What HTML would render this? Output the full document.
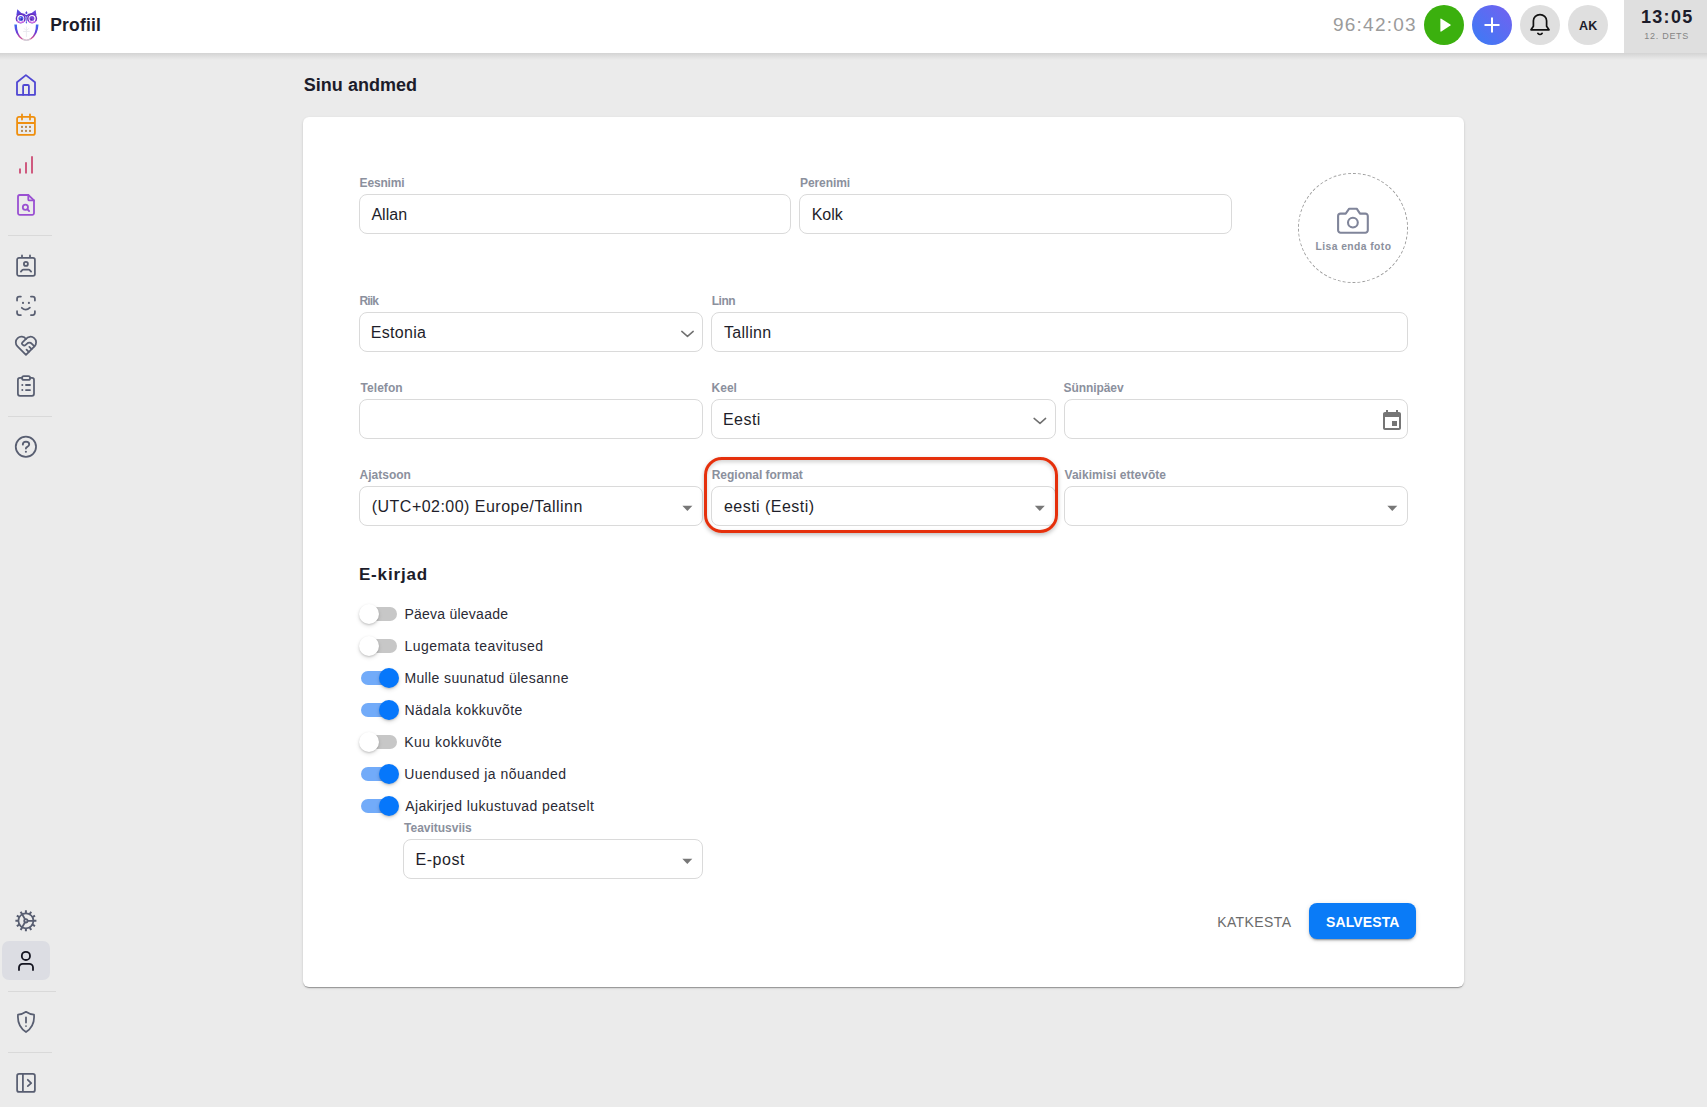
<!DOCTYPE html>
<html><head><meta charset="utf-8"><title>Profiil</title><style>
*{box-sizing:border-box;margin:0;padding:0}
html,body{width:1707px;height:1107px;overflow:hidden;background:#ebebeb;font-family:"Liberation Sans",sans-serif}
.a,.t{position:absolute}
.t{white-space:nowrap}
svg{position:absolute;left:0;top:0;overflow:visible}
</style></head>
<body>
<div class="a" style="left:0px;top:53px;width:1707px;height:7px;background:linear-gradient(rgba(0,0,0,.10),rgba(0,0,0,.055) 45%,rgba(0,0,0,0))"></div>
<div class="a" style="left:0px;top:0px;width:1707px;height:53px;background:#fff"></div>
<div class="a" style="left:1624px;top:0px;width:83px;height:53px;background:#dfdfdf"></div>
<div class="t" style="left:50.25px;top:13.83px;font-size:17.5px;line-height:22px;font-weight:700;color:#1c1c2a;letter-spacing:0.167px;">Profiil</div>
<div class="t" style="left:1333.00px;top:13.41px;font-size:19px;line-height:24px;font-weight:400;color:#9b9b9b;letter-spacing:1.229px;">96:42:03</div>
<div class="a" style="left:1424px;top:5px;width:40px;height:40px;background:#3bb00e;border-radius:50%"></div>
<div class="a" style="left:1472px;top:5px;width:40px;height:40px;background:linear-gradient(225deg,#7460f0,#3a7cf5);border-radius:50%"></div>
<div class="a" style="left:1520px;top:5px;width:40px;height:40px;background:#dfdfdf;border-radius:50%"></div>
<div class="a" style="left:1568px;top:5px;width:40px;height:40px;background:#dfdfdf;border-radius:50%"></div>
<div class="t" style="left:1578.90px;top:18.37px;font-size:12.5px;line-height:16px;font-weight:700;color:#1c1c2a;letter-spacing:0.4px;">AK</div>
<div class="t" style="left:1640.90px;top:5.86px;font-size:18px;line-height:22px;font-weight:700;color:#1c1c2a;letter-spacing:1.35px;">13:05</div>
<div class="t" style="left:1644.30px;top:31.08px;font-size:9px;line-height:11px;font-weight:400;color:#858585;letter-spacing:0.714px;">12. DETS</div>
<div class="t" style="left:303.70px;top:73.76px;font-size:18px;line-height:22px;font-weight:700;color:#1c1c2a;letter-spacing:0.04px;">Sinu andmed</div>
<div class="a" style="left:303px;top:117px;width:1161px;height:870px;background:#fff;border-radius:6px;box-shadow:0px 2px 1px -1px rgba(0,0,0,0.2),0px 1px 1px 0px rgba(0,0,0,0.14),0px 1px 3px 0px rgba(0,0,0,0.12)"></div>
<div class="t" style="left:359.60px;top:176.14px;font-size:12px;line-height:15px;font-weight:700;color:#8b909d;letter-spacing:-0.167px;">Eesnimi</div>
<div class="t" style="left:800.00px;top:176.14px;font-size:12px;line-height:15px;font-weight:700;color:#8b909d;letter-spacing:-0.086px;">Perenimi</div>
<div class="a" style="left:359px;top:194px;width:432px;height:40px;border:1px solid #dadada;border-radius:8px;background:#fff"></div>
<div class="a" style="left:799px;top:194px;width:433px;height:40px;border:1px solid #dadada;border-radius:8px;background:#fff"></div>
<div class="t" style="left:371.40px;top:204.55px;font-size:16px;line-height:20px;font-weight:400;color:#1e1e2a;letter-spacing:0.05px;">Allan</div>
<div class="t" style="left:811.70px;top:204.55px;font-size:16px;line-height:20px;font-weight:400;color:#1e1e2a;letter-spacing:0.0px;">Kolk</div>
<div class="a" style="left:1298px;top:173px;width:110px;height:110px;border:1px dashed #9e9e9e;border-radius:50%"></div>
<div class="t" style="left:1315.60px;top:239.53px;font-size:10.3px;line-height:13px;font-weight:700;color:#8b909d;letter-spacing:0.431px;">Lisa enda foto</div>
<div class="t" style="left:359.50px;top:294.24px;font-size:12px;line-height:15px;font-weight:700;color:#8b909d;letter-spacing:-0.867px;">Riik</div>
<div class="t" style="left:711.70px;top:294.24px;font-size:12px;line-height:15px;font-weight:700;color:#8b909d;letter-spacing:-0.467px;">Linn</div>
<div class="a" style="left:359px;top:312px;width:344.33000000000004px;height:40px;border:1px solid #dadada;border-radius:8px;background:#fff"></div>
<div class="a" style="left:711.33px;top:312px;width:696.67px;height:40px;border:1px solid #dadada;border-radius:8px;background:#fff"></div>
<div class="t" style="left:370.80px;top:322.95px;font-size:16px;line-height:20px;font-weight:400;color:#1e1e2a;letter-spacing:0.3px;">Estonia</div>
<div class="t" style="left:724.00px;top:322.75px;font-size:16px;line-height:20px;font-weight:400;color:#1e1e2a;letter-spacing:0.3px;">Tallinn</div>
<div class="t" style="left:360.60px;top:380.64px;font-size:12px;line-height:15px;font-weight:700;color:#8b909d;letter-spacing:0.033px;">Telefon</div>
<div class="t" style="left:711.60px;top:380.64px;font-size:12px;line-height:15px;font-weight:700;color:#8b909d;letter-spacing:0.0px;">Keel</div>
<div class="t" style="left:1063.50px;top:380.64px;font-size:12px;line-height:15px;font-weight:700;color:#8b909d;letter-spacing:-0.075px;">Sünnipäev</div>
<div class="a" style="left:359px;top:399px;width:344.33000000000004px;height:40px;border:1px solid #dadada;border-radius:8px;background:#fff"></div>
<div class="a" style="left:711.33px;top:399px;width:344.34000000000003px;height:40px;border:1px solid #dadada;border-radius:8px;background:#fff"></div>
<div class="a" style="left:1063.67px;top:399px;width:344.3299999999999px;height:40px;border:1px solid #dadada;border-radius:8px;background:#fff"></div>
<div class="t" style="left:723.00px;top:409.65px;font-size:16px;line-height:20px;font-weight:400;color:#1e1e2a;letter-spacing:0.45px;">Eesti</div>
<div class="t" style="left:359.60px;top:468.34px;font-size:12px;line-height:15px;font-weight:700;color:#8b909d;letter-spacing:0.0px;">Ajatsoon</div>
<div class="t" style="left:711.70px;top:468.34px;font-size:12px;line-height:15px;font-weight:700;color:#8b909d;letter-spacing:-0.014px;">Regional format</div>
<div class="t" style="left:1064.50px;top:468.34px;font-size:12px;line-height:15px;font-weight:700;color:#8b909d;letter-spacing:0.047px;">Vaikimisi ettevõte</div>
<div class="a" style="left:359px;top:486px;width:344.33000000000004px;height:40px;border:1px solid #dadada;border-radius:8px;background:#fff"></div>
<div class="a" style="left:711.33px;top:486px;width:344.34000000000003px;height:40px;border:1px solid #dadada;border-radius:8px;background:#fff"></div>
<div class="a" style="left:1063.67px;top:486px;width:344.3299999999999px;height:40px;border:1px solid #dadada;border-radius:8px;background:#fff"></div>
<div class="t" style="left:371.80px;top:496.65px;font-size:16px;line-height:20px;font-weight:400;color:#1e1e2a;letter-spacing:0.472px;">(UTC+02:00) Europe/Tallinn</div>
<div class="t" style="left:724.00px;top:497.25px;font-size:16px;line-height:20px;font-weight:400;color:#1e1e2a;letter-spacing:0.467px;">eesti (Eesti)</div>
<div class="a" style="left:704px;top:457px;width:354px;height:76px;border:3px solid #e5300c;border-radius:18px;box-shadow:0 2px 4px rgba(0,0,0,.25), inset 0 2px 4px rgba(0,0,0,.18)"></div>
<div class="t" style="left:358.90px;top:564.41px;font-size:17px;line-height:21px;font-weight:700;color:#1c1c2a;letter-spacing:0.857px;">E-kirjad</div>
<div class="a" style="left:361px;top:607px;width:36px;height:14px;background:#c7c7c7;border-radius:7px"></div>
<div class="a" style="left:359px;top:604px;width:20px;height:20px;background:#fff;border-radius:50%;box-shadow:0 1px 2px rgba(0,0,0,0.16),0 2px 4px rgba(0,0,0,0.12)"></div>
<div class="t" style="left:404.40px;top:604.85px;font-size:14px;line-height:18px;font-weight:400;color:#2a2a35;letter-spacing:0.246px;">Päeva ülevaade</div>
<div class="a" style="left:361px;top:639px;width:36px;height:14px;background:#c7c7c7;border-radius:7px"></div>
<div class="a" style="left:359px;top:636px;width:20px;height:20px;background:#fff;border-radius:50%;box-shadow:0 1px 2px rgba(0,0,0,0.16),0 2px 4px rgba(0,0,0,0.12)"></div>
<div class="t" style="left:404.40px;top:636.85px;font-size:14px;line-height:18px;font-weight:400;color:#2a2a35;letter-spacing:0.478px;">Lugemata teavitused</div>
<div class="a" style="left:361px;top:671px;width:36px;height:14px;background:#72abf9;border-radius:7px"></div>
<div class="a" style="left:379px;top:668px;width:20px;height:20px;background:#0677fb;border-radius:50%;box-shadow:0 1px 2px rgba(0,0,0,0.16),0 2px 4px rgba(0,0,0,0.12)"></div>
<div class="t" style="left:404.40px;top:668.85px;font-size:14px;line-height:18px;font-weight:400;color:#2a2a35;letter-spacing:0.382px;">Mulle suunatud ülesanne</div>
<div class="a" style="left:361px;top:703px;width:36px;height:14px;background:#72abf9;border-radius:7px"></div>
<div class="a" style="left:379px;top:700px;width:20px;height:20px;background:#0677fb;border-radius:50%;box-shadow:0 1px 2px rgba(0,0,0,0.16),0 2px 4px rgba(0,0,0,0.12)"></div>
<div class="t" style="left:404.40px;top:700.85px;font-size:14px;line-height:18px;font-weight:400;color:#2a2a35;letter-spacing:0.44px;">Nädala kokkuvõte</div>
<div class="a" style="left:361px;top:735px;width:36px;height:14px;background:#c7c7c7;border-radius:7px"></div>
<div class="a" style="left:359px;top:732px;width:20px;height:20px;background:#fff;border-radius:50%;box-shadow:0 1px 2px rgba(0,0,0,0.16),0 2px 4px rgba(0,0,0,0.12)"></div>
<div class="t" style="left:404.20px;top:732.85px;font-size:14px;line-height:18px;font-weight:400;color:#2a2a35;letter-spacing:0.483px;">Kuu kokkuvõte</div>
<div class="a" style="left:361px;top:767px;width:36px;height:14px;background:#72abf9;border-radius:7px"></div>
<div class="a" style="left:379px;top:764px;width:20px;height:20px;background:#0677fb;border-radius:50%;box-shadow:0 1px 2px rgba(0,0,0,0.16),0 2px 4px rgba(0,0,0,0.12)"></div>
<div class="t" style="left:404.20px;top:764.85px;font-size:14px;line-height:18px;font-weight:400;color:#2a2a35;letter-spacing:0.46px;">Uuendused ja nõuanded</div>
<div class="a" style="left:361px;top:799px;width:36px;height:14px;background:#72abf9;border-radius:7px"></div>
<div class="a" style="left:379px;top:796px;width:20px;height:20px;background:#0677fb;border-radius:50%;box-shadow:0 1px 2px rgba(0,0,0,0.16),0 2px 4px rgba(0,0,0,0.12)"></div>
<div class="t" style="left:405.20px;top:796.85px;font-size:14px;line-height:18px;font-weight:400;color:#2a2a35;letter-spacing:0.4px;">Ajakirjed lukustuvad peatselt</div>
<div class="t" style="left:404.10px;top:821.04px;font-size:12px;line-height:15px;font-weight:700;color:#8b909d;letter-spacing:-0.018px;">Teavitusviis</div>
<div class="a" style="left:403px;top:839px;width:300px;height:40px;border:1px solid #dadada;border-radius:8px;background:#fff"></div>
<div class="t" style="left:415.50px;top:850.25px;font-size:16px;line-height:20px;font-weight:400;color:#1e1e2a;letter-spacing:0.56px;">E-post</div>
<div class="t" style="left:1217.20px;top:912.95px;font-size:14px;line-height:18px;font-weight:400;color:#6b6b6b;letter-spacing:0.4px;">KATKESTA</div>
<div class="a" style="left:1309px;top:903px;width:107px;height:36px;background:#0a7bf7;border-radius:8px;box-shadow:0px 3px 1px -2px rgba(0,0,0,0.2),0px 2px 2px 0px rgba(0,0,0,0.14),0px 1px 5px 0px rgba(0,0,0,0.12)"></div>
<div class="t" style="left:1326.00px;top:912.95px;font-size:14px;line-height:18px;font-weight:700;color:#ffffff;letter-spacing:0.114px;">SALVESTA</div>
<div class="a" style="left:8px;top:235px;width:44px;height:1px;background:#d9d9d9"></div>
<div class="a" style="left:8px;top:416px;width:44px;height:1px;background:#d9d9d9"></div>
<div class="a" style="left:8px;top:1052px;width:44px;height:1px;background:#d9d9d9"></div>
<div class="a" style="left:8px;top:991px;width:48px;height:1px;background:#d9d9d9"></div>
<div class="a" style="left:2px;top:941px;width:48px;height:39px;background:#dcdde3;border-radius:7px"></div>
<svg width="1707" height="1107" viewBox="0 0 1707 1107" fill="none" stroke-linecap="round" stroke-linejoin="round">
<defs>
<linearGradient id="owlg" x1="0" y1="0" x2="0" y2="1"><stop offset="0" stop-color="#3a6cf0"/><stop offset=".5" stop-color="#6a3ad8"/><stop offset=".85" stop-color="#d04a90"/><stop offset="1" stop-color="#e0c0d0"/></linearGradient>
<linearGradient id="owlh" x1="0" y1="0" x2="0" y2="1"><stop offset="0" stop-color="#5a3fe0"/><stop offset="1" stop-color="#8a3ad0"/></linearGradient>
</defs>
<!-- owl logo -->
<g>
<path d="M17.3 9.2 L16.3 15.6 L22.4 13.9 Z" fill="#5846de"/>
<path d="M35.6 10 L36.5 15.6 L30.4 13.9 Z" fill="#6a44de"/>
<path d="M20.5 14.1 Q23.8 13.6 26.4 16.2 Q29 13.6 32.3 14.1" stroke="#5b3fd8" stroke-width="1.3"/>
<path d="M26.4 11 L25.2 12.9 L26.4 14.2 L27.6 12.9 Z" fill="#5a44dc"/>
<circle cx="20.7" cy="18.5" r="4.3" stroke="#6a30c0" stroke-width="1.5"/>
<circle cx="32.1" cy="18.5" r="4.3" stroke="#6a30c0" stroke-width="1.5"/>
<path d="M17.6 21.6 Q20.7 23.4 23.8 21.6 M29 21.6 Q32.1 23.4 35.2 21.6" stroke="#e27ae8" stroke-width="1.1"/>
<circle cx="20.9" cy="18.5" r="2.5" fill="#4b5ce8"/>
<circle cx="31.9" cy="18.5" r="2.5" fill="#7848d8"/>
<circle cx="21.6" cy="19.3" r="0.9" fill="#3a2aa0"/>
<circle cx="31.2" cy="19.3" r="0.9" fill="#5a2aa0"/>
<circle cx="20.2" cy="17.6" r="0.6" fill="#c8d0ff"/>
<path d="M26.4 17 V22.8" stroke="#5a60e0" stroke-width="0.8"/>
<path d="M25.6 22.1 L26.4 23.8 L27.2 22.1 Z" fill="#4a66e6"/>
<path d="M14.3 24.6 Q14.7 34.6 21.5 39.3 Q23.8 40.8 26.4 40.8 L26.4 39.7 Q24.2 39.6 22.2 38.2 Q16.8 33.8 16.9 24.4 Z" fill="url(#owlg)"/>
<path d="M38.5 24.6 Q38.1 34.6 31.3 39.3 Q29 40.8 26.4 40.8 L26.4 39.7 Q28.6 39.6 30.6 38.2 Q36 33.8 35.9 24.4 Z" fill="url(#owlg)"/>
<path d="M22.8 39 Q24.6 40.3 26.4 40.3 Q28.2 40.3 30 39" stroke="#d0d0d8" stroke-width="1.2"/>
<path d="M26.4 27 V36.5 M23.5 31.5 H29.3 M24.3 28.6 L25.6 30 M28.5 28.6 L27.2 30" stroke="#e6e6ec" stroke-width="0.8"/>
</g>
<!-- header buttons -->
<path d="M1440.4 19.2 Q1440.4 18.2 1441.3 18.7 L1450.4 24.4 Q1451.2 25 1450.4 25.6 L1441.3 31.5 Q1440.4 32 1440.4 31 Z" fill="#fff"/>
<path d="M1492 17.6 V32.6 M1484.5 25 H1499.5" stroke="#fff" stroke-width="2" stroke-linecap="butt"/>
<path d="M1531 29.8 H1549 L1546.6 26.2 V20.8 A6.6 6.2 0 0 0 1533.4 20.8 V26.2 Z" stroke="#111" stroke-width="1.7"/>
<path d="M1537.9 33.4 Q1540 35.6 1542.1 33.4" stroke="#111" stroke-width="1.7"/>

<!-- sidebar colored icons -->
<g stroke-width="1.8">
<path d="M17 94.4 V82.2 L25.9 75.1 L35 82.2 V94.4 Q35 94.8 34.6 94.8 H17.4 Q17 94.8 17 94.4 Z" stroke="#5047d3"/>
<path d="M23.1 94.8 V86 Q23.1 85 24.1 85 H27.9 Q28.9 85 28.9 86 V94.8" stroke="#5047d3"/>
<path d="M19 116.9 H33 A1.9 1.9 0 0 1 34.9 118.8 V132.9 A1.9 1.9 0 0 1 33 134.8 H19 A1.9 1.9 0 0 1 17.1 132.9 V118.8 A1.9 1.9 0 0 1 19 116.9 Z M17.1 123 H34.9 M22 114.3 V119.5 M30 114.3 V119.5" stroke="#ef8f0e"/>
<path d="M20 168.4 V173.6 M26 162.3 V173.6 M32 156.2 V173.6" stroke="#cf5a7f" stroke-width="2" stroke-linecap="butt"/>
<path d="M28.3 195 H19.8 A1.8 1.8 0 0 0 18 196.8 V213 A1.8 1.8 0 0 0 19.8 214.8 H32.2 A1.8 1.8 0 0 0 34 213 V200.4 Z" stroke="#9a50d2"/>
<path d="M28.3 195 V199.4 A1 1 0 0 0 29.3 200.4 H34" stroke="#9a50d2"/>
<circle cx="25.4" cy="207.2" r="2.6" stroke="#9a50d2"/>
<path d="M27.5 209.4 L29.1 211" stroke="#9a50d2"/>
</g>
<g fill="#b88c55">
<rect x="21" y="125.9" width="2" height="2"/><rect x="25" y="125.9" width="2" height="2"/><rect x="29" y="125.9" width="2" height="2"/>
<rect x="21" y="129.9" width="2" height="2"/><rect x="25" y="129.9" width="2" height="2"/><rect x="29" y="129.9" width="2" height="2"/>
</g>

<!-- sidebar gray icons -->
<g stroke="#585e71" stroke-width="1.75">
<!-- calendar user -->
<path d="M19 257.9 H33 A1.9 1.9 0 0 1 34.9 259.8 V274 A1.9 1.9 0 0 1 33 275.9 H19 A1.9 1.9 0 0 1 17.1 274 V259.8 A1.9 1.9 0 0 1 19 257.9 Z M22 255.4 V257.9 M30 255.4 V257.9"/>
<circle cx="25.9" cy="263.9" r="2"/>
<path d="M20.9 271.6 L22.2 270.1 Q22.6 269.7 23.2 269.7 H28.7 Q29.3 269.7 29.7 270.1 L31.1 271.6"/>
<!-- face id -->
<path d="M17.06 300.6 V298.8 A2.2 2.2 0 0 1 19.26 296.6 H20.9 M30.9 296.6 H32.7 A2.2 2.2 0 0 1 34.9 298.8 V300.6 M17.06 311.2 V312.8 A2.2 2.2 0 0 0 19.26 315 H20.9 M30.9 315 H32.7 A2.2 2.2 0 0 0 34.9 312.8 V311.2"/>
<path d="M23 302.9 h0.01 M28.9 302.9 h0.01" stroke-width="2.1"/>
<path d="M21.8 307.8 Q25.8 311.6 29.9 307.6"/>
<!-- heart handshake (tabler, scale 1.13) -->
<g transform="translate(12.4 332.2) scale(1.13)" stroke-width="1.55">
<path d="M19.5 12.572l-7.5 7.428l-7.5 -7.428a5 5 0 1 1 7.5 -6.566a5 5 0 1 1 7.5 6.572"/>
<path d="M12 6l-3.293 3.293a1 1 0 0 0 0 1.414l.543 .543c.69 .69 1.81 .69 2.5 0l1 -1a3.182 3.182 0 0 1 4.5 0l2.25 2.25"/>
<path d="M12.5 15.5l2 2"/><path d="M15 13l2 2"/>
</g>
<!-- clipboard list -->
<path d="M22 377.9 H19.9 A2 2 0 0 0 17.9 379.9 V393.8 A2 2 0 0 0 19.9 395.8 H32 A2 2 0 0 0 34 393.8 V379.9 A2 2 0 0 0 32 377.9 H30.2"/>
<rect x="22.1" y="376.1" width="8" height="3.8" rx="1.7"/>
<path d="M22.3 385 h0.01 M22.3 390.1 h0.01" stroke-width="2"/>
<path d="M26 385 H30 M26 390.1 H30" stroke-width="1.9"/>
<!-- help -->
<circle cx="25.9" cy="446.8" r="10.15"/>
<path d="M22.8 444.6 Q22.9 441.7 26 441.6 Q29.2 441.7 29.2 444.3 Q29.2 446.1 27.3 446.9 Q25.9 447.5 25.9 448.6" stroke-width="1.85"/>
<path d="M25.9 451.8 v0.01" stroke-width="2.1"/>
<!-- gear -->
<circle cx="25.9" cy="920.8" r="7.5"/>
<circle cx="25.9" cy="920.8" r="1.7"/>
<path d="M27.6 920.8 H33.4 M25 919.3 L22.15 914.3 M25 922.3 L22.15 927.3"/>
<g stroke-width="2" stroke-linecap="butt">
<path d="M25.9 913.3 V910.3 M25.9 928.3 V931.3 M18.4 920.8 H15.4 M33.4 920.8 H36.4 M22.15 914.3 L20.65 911.7 M29.65 927.3 L31.15 929.9 M22.15 927.3 L20.65 929.9 M29.65 914.3 L31.15 911.7 M19.4 917.05 L16.8 915.55 M32.4 924.55 L35 926.05 M19.4 924.55 L16.8 926.05 M32.4 917.05 L35 915.55"/>
</g>
<!-- shield -->
<path d="M26 1011.8 Q22 1014.5 18 1014.7 Q17 1026 26 1032 Q35 1026 34 1014.7 Q30 1014.5 26 1011.8 Z"/>
<path d="M26 1017.3 V1022.6 M26 1026.1 v0.01"/>
<!-- collapse -->
<path d="M19.1 1073.9 H32.9 A2 2 0 0 1 34.9 1075.9 V1089.9 A2 2 0 0 1 32.9 1091.9 H19.1 A2 2 0 0 1 17.1 1089.9 V1075.9 A2 2 0 0 1 19.1 1073.9 Z M22.9 1073.9 V1091.9 M27.8 1079.8 L31.2 1083.1 L27.8 1086.1"/>
</g>
<!-- active user -->
<g stroke="#141420" stroke-width="1.8">
<circle cx="25.9" cy="955.9" r="4.1"/>
<path d="M19 970 V967.5 A3.7 3.7 0 0 1 22.7 963.8 H29.3 A3.7 3.7 0 0 1 33 967.5 V970"/>
</g>

<!-- camera -->
<path d="M1340.6 213.6 H1345.7 L1349.2 208.7 H1356.7 L1360 213.6 H1365.3 A2.5 2.5 0 0 1 1367.8 216.1 V230.2 A2.5 2.5 0 0 1 1365.3 232.7 H1340.6 A2.5 2.5 0 0 1 1338.1 230.2 V216.1 A2.5 2.5 0 0 1 1340.6 213.6 Z" stroke="#80859a" stroke-width="2.1"/>
<circle cx="1352.9" cy="222.6" r="4.9" stroke="#80859a" stroke-width="2.1"/>

<!-- select chevrons -->
<path d="M681.8 331.4 L687.5 336.4 L693.2 331.4" stroke="#707070" stroke-width="1.5"/>
<path d="M1034.1 418.4 L1040 423.4 L1045.6 418.4" stroke="#707070" stroke-width="1.5"/>
<!-- dropdown triangles -->
<g fill="#777">
<path d="M682.4 505.8 h10 l-5 5.2 z"/>
<path d="M1034.8 505.8 h10 l-5 5.2 z"/>
<path d="M1387.3 505.8 h10 l-5 5.2 z"/>
<path d="M682.3 858.7 h10 l-5 5.2 z"/>
</g>
<!-- calendar picker icon (material event) -->
<path transform="translate(1380 409)" fill="#757575" d="M17 12h-5v5h5v-5zM16 1v2H8V1H6v2H5c-1.11 0-1.99.9-1.99 2L3 19c0 1.1.89 2 2 2h14c1.1 0 2-.9 2-2V5c0-1.1-.9-2-2-2h-1V1h-2zm3 18H5V8h14v11z"/>
</svg>

</body></html>
